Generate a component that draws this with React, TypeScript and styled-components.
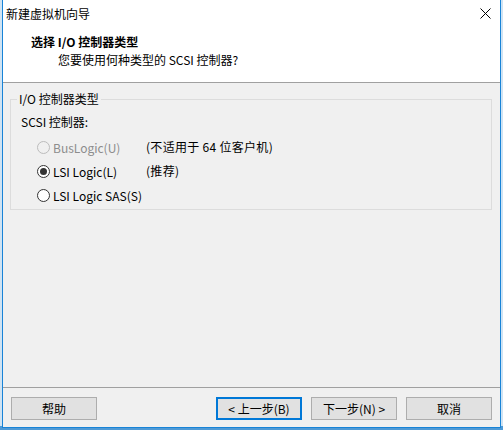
import styled, { createGlobalStyle } from 'styled-components';

const GlobalStyle = createGlobalStyle`
  html, body {
    margin: 0;
    padding: 0;
    background: #b9d6ee;
  }
  body {
    font-family: "Noto Sans CJK SC", "Noto Sans", sans-serif;
    font-size: 12px;
    color: #000;
  }
`;

const Desktop = styled.div`
  width: 503px;
  height: 430px;
  padding-left: 2px;
  box-sizing: border-box;
  background: linear-gradient(to bottom, #cfe3f3 0%, #cfe3f3 99%, #4f9ad6 99%);
`;

const Window = styled.div`
  width: 499px;
  height: 428px;
  box-sizing: border-box;
  border: 1px solid #1883d7;
  border-top: none;
  display: flex;
  flex-direction: column;
  background: #f0f0f0;
`;

const TitleBar = styled.div`
  height: 27px;
  display: flex;
  align-items: center;
  justify-content: space-between;
  background: #fff;
  padding-left: 3px;
  padding-right: 9px;
  line-height: 27px;
`;

const CloseIcon = styled.svg`
  width: 11px;
  height: 11px;
  margin-top: -1px;
`;

const Header = styled.div`
  height: 48px;
  padding-top: 7px;
  background: #fff;
  border-bottom: 1px solid #a0a0a0;
  display: flex;
  flex-direction: column;
  gap: 2px;
`;

const Heading = styled.div`
  padding-left: 28px;
  font-weight: bold;
  line-height: 16px;
`;

const SubHeading = styled.div`
  padding-left: 55px;
  line-height: 16px;
`;

const Body = styled.div`
  flex: 1;
  padding: 8px 8px 0 7px;
`;

const Group = styled.fieldset`
  margin: 0;
  padding: 0 0 2px 0;
  border: 1px solid #dcdcdc;
  min-width: 0;
`;

const Legend = styled.legend`
  margin-left: 6px;
  padding: 0 2px;
  line-height: 16px;
`;

const FieldLabel = styled.div`
  padding-left: 10px;
  margin-top: 7px;
  margin-bottom: 5px;
  line-height: 16px;
`;

const OptionRow = styled.label`
  display: grid;
  grid-template-columns: 109px auto;
  align-items: center;
  height: 24px;
  padding-left: 26px;
`;

const OptionMain = styled.span<{ disabled?: boolean }>`
  display: flex;
  align-items: center;
  gap: 3px;
  color: ${(props) => (props.disabled ? '#8d8d8d' : '#000')};
`;

const RadioCircle = styled.span<{ checked?: boolean; disabled?: boolean }>`
  width: 13px;
  height: 13px;
  box-sizing: border-box;
  border-radius: 50%;
  border: 1px solid ${(props) => (props.disabled ? '#bcbcbc' : '#333')};
  background: ${(props) => (props.disabled ? '#f0f0f0' : '#fff')};
  display: flex;
  align-items: center;
  justify-content: center;

  &::after {
    content: '';
    display: ${(props) => (props.checked ? 'block' : 'none')};
    width: 7px;
    height: 7px;
    border-radius: 50%;
    background: #333;
  }
`;

const Note = styled.span`
  line-height: 16px;
  letter-spacing: 0.3px;
`;

const Footer = styled.div`
  border-top: 1px solid #a0a0a0;
  padding: 9px 8px 7px 8px;
  display: flex;
  align-items: center;
  gap: 9px;
`;

const Spacer = styled.div`
  flex: 1;
`;

const Button = styled.button<{ focused?: boolean }>`
  width: 86px;
  height: 23px;
  box-sizing: border-box;
  padding: 0;
  background: #e1e1e1;
  border: ${(props) => (props.focused ? '2px solid #0078d7' : '1px solid #adadad')};
  font-family: "Noto Sans CJK SC", "Noto Sans", sans-serif;
  font-size: 12px;
  line-height: 16px;
  color: #000;
`;

type Option = {
  label: string;
  note?: string;
  checked?: boolean;
  disabled?: boolean;
};

const options: Option[] = [
  { label: 'BusLogic(U)', note: '(不适用于 64 位客户机)', disabled: true },
  { label: 'LSI Logic(L)', note: '(推荐)', checked: true },
  { label: 'LSI Logic SAS(S)' },
];

export default function App() {
  return (
    <>
      <GlobalStyle />
      <Desktop>
        <Window>
          <TitleBar>
            <span>新建虚拟机向导</span>
            <CloseIcon viewBox="0 0 11 11">
              <path d="M0.5 0.5 L10.5 10.5 M10.5 0.5 L0.5 10.5" stroke="#000" strokeWidth="1" fill="none" />
            </CloseIcon>
          </TitleBar>
          <Header>
            <Heading>选择 I/O 控制器类型</Heading>
            <SubHeading>您要使用何种类型的 SCSI 控制器?</SubHeading>
          </Header>
          <Body>
            <Group>
              <Legend>I/O 控制器类型</Legend>
              <FieldLabel>SCSI 控制器:</FieldLabel>
              {options.map((opt) => (
                <OptionRow key={opt.label}>
                  <OptionMain disabled={opt.disabled}>
                    <RadioCircle checked={opt.checked} disabled={opt.disabled} />
                    {opt.label}
                  </OptionMain>
                  {opt.note && <Note>{opt.note}</Note>}
                </OptionRow>
              ))}
            </Group>
          </Body>
          <Footer>
            <Button>帮助</Button>
            <Spacer />
            <Button focused>&lt; 上一步(B)</Button>
            <Button>下一步(N) &gt;</Button>
            <Button>取消</Button>
          </Footer>
        </Window>
      </Desktop>
    </>
  );
}
